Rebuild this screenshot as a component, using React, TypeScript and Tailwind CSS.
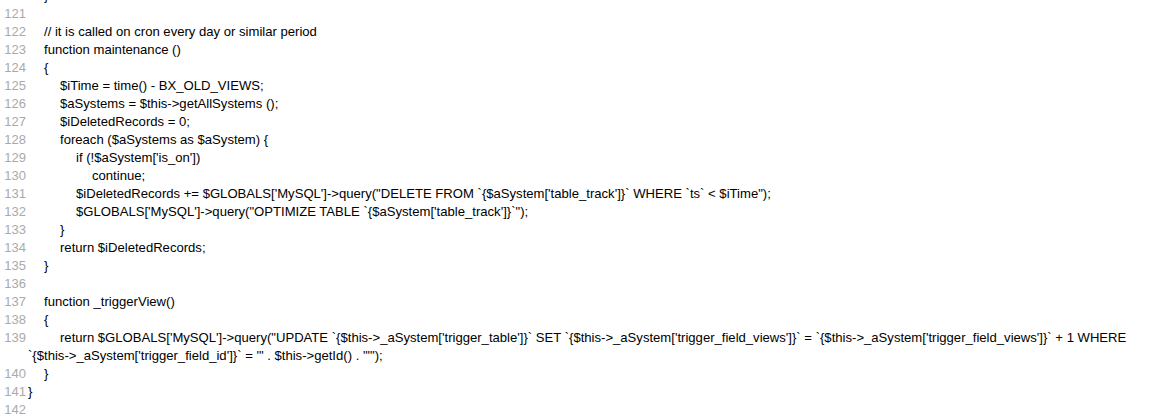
import React from "react";

const lines: [number, string][] = [
  [120, "\t}"],
  [121, ""],
  [122, "\t// it is called on cron every day or similar period"],
  [123, "\tfunction maintenance ()"],
  [124, "\t{"],
  [125, "\t\t$iTime = time() - BX_OLD_VIEWS;"],
  [126, "\t\t$aSystems = $this->getAllSystems ();"],
  [127, "\t\t$iDeletedRecords = 0;"],
  [128, "\t\tforeach ($aSystems as $aSystem) {"],
  [129, "\t\t\tif (!$aSystem['is_on'])"],
  [130, "\t\t\t\tcontinue;"],
  [131, "\t\t\t$iDeletedRecords += $GLOBALS['MySQL']->query(\"DELETE FROM `{$aSystem['table_track']}` WHERE `ts` < $iTime\");"],
  [132, "\t\t\t$GLOBALS['MySQL']->query(\"OPTIMIZE TABLE `{$aSystem['table_track']}`\");"],
  [133, "\t\t}"],
  [134, "\t\treturn $iDeletedRecords;"],
  [135, "\t}"],
  [136, ""],
  [137, "\tfunction _triggerView()"],
  [138, "\t{"],
  [139, "\t\treturn $GLOBALS['MySQL']->query(\"UPDATE `{$this->_aSystem['trigger_table']}` SET `{$this->_aSystem['trigger_field_views']}` = `{$this->_aSystem['trigger_field_views']}` + 1 WHERE `{$this->_aSystem['trigger_field_id']}` = '\" . $this->getId() . \"'\");"],
  [140, "\t}"],
  [141, "}"],
  [142, ""],
];

export default function App() {
  return (
    <div className="w-[1170px] h-[415px] overflow-hidden bg-white font-['Liberation_Sans',Arial,sans-serif] text-[13.1px] leading-[18px]">
      <div className="mt-[-13px] flex flex-col">
        {lines.map(([n, t]) => (
          <div key={n} className="flex">
            <div className="w-[26px] shrink-0 text-right text-[13px] text-[#aaaaaa]">{n}</div>
            <div className="ml-[2px] w-[1130px] whitespace-pre-wrap text-black [tab-size:16px]">
              {t === "" ? "\u00a0" : t}
            </div>
          </div>
        ))}
      </div>
    </div>
  );
}
